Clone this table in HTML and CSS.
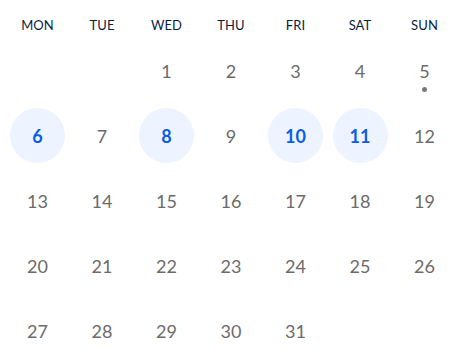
FILE: index.html
```html
<!DOCTYPE html>
<html>
<head>
<meta charset="utf-8">
<link rel="stylesheet" href="styles.css">
</head>
<body>
<div class="calendar">
  <div class="week head">
    <div class="dow">MON</div><div class="dow">TUE</div><div class="dow">WED</div><div class="dow">THU</div><div class="dow">FRI</div><div class="dow">SAT</div><div class="dow">SUN</div>
  </div>
  <div class="days">
    <div class="day empty"></div>
    <div class="day empty"></div>
    <div class="day">1</div>
    <div class="day">2</div>
    <div class="day">3</div>
    <div class="day">4</div>
    <div class="day has-event">5</div>
    <div class="day sel">6</div>
    <div class="day">7</div>
    <div class="day sel">8</div>
    <div class="day">9</div>
    <div class="day sel">10</div>
    <div class="day sel">11</div>
    <div class="day">12</div>
    <div class="day">13</div>
    <div class="day">14</div>
    <div class="day">15</div>
    <div class="day">16</div>
    <div class="day">17</div>
    <div class="day">18</div>
    <div class="day">19</div>
    <div class="day">20</div>
    <div class="day">21</div>
    <div class="day">22</div>
    <div class="day">23</div>
    <div class="day">24</div>
    <div class="day">25</div>
    <div class="day">26</div>
    <div class="day">27</div>
    <div class="day">28</div>
    <div class="day">29</div>
    <div class="day">30</div>
    <div class="day">31</div>
  </div>
</div>
</body>
</html>
```
FILE: styles.css
```css
html, body {
  margin: 0;
  padding: 0;
  background: #ffffff;
}
body {
  font-family: Lato, "Open Sans", "Liberation Sans", sans-serif;
}
.calendar {
  width: 454px;
  box-sizing: border-box;
  padding: 0 2px 0 10px;
}
.week, .days {
  display: grid;
  grid-template-columns: repeat(7, 55px);
  justify-content: space-between;
}
.head {
  height: 43px;
}
.dow {
  display: flex;
  align-items: center;
  justify-content: center;
  padding-top: 7px;
  font-size: 13px;
  color: #0b1d3f;
  letter-spacing: 0.1px;
}
.days {
  grid-auto-rows: 55px;
  row-gap: 10px;
}
.day {
  position: relative;
  display: flex;
  align-items: center;
  justify-content: center;
  border-radius: 50%;
  font-size: 18px;
  color: #6b6b6b;
}
.day.sel {
  background: #edf4ff;
  color: #0a5ce6;
  font-weight: 700;
}
.day.has-event::after {
  content: "";
  position: absolute;
  left: 50%;
  top: 44px;
  width: 5px;
  height: 5px;
  margin-left: -2.5px;
  border-radius: 50%;
  background: #7a7a7a;
}
```
